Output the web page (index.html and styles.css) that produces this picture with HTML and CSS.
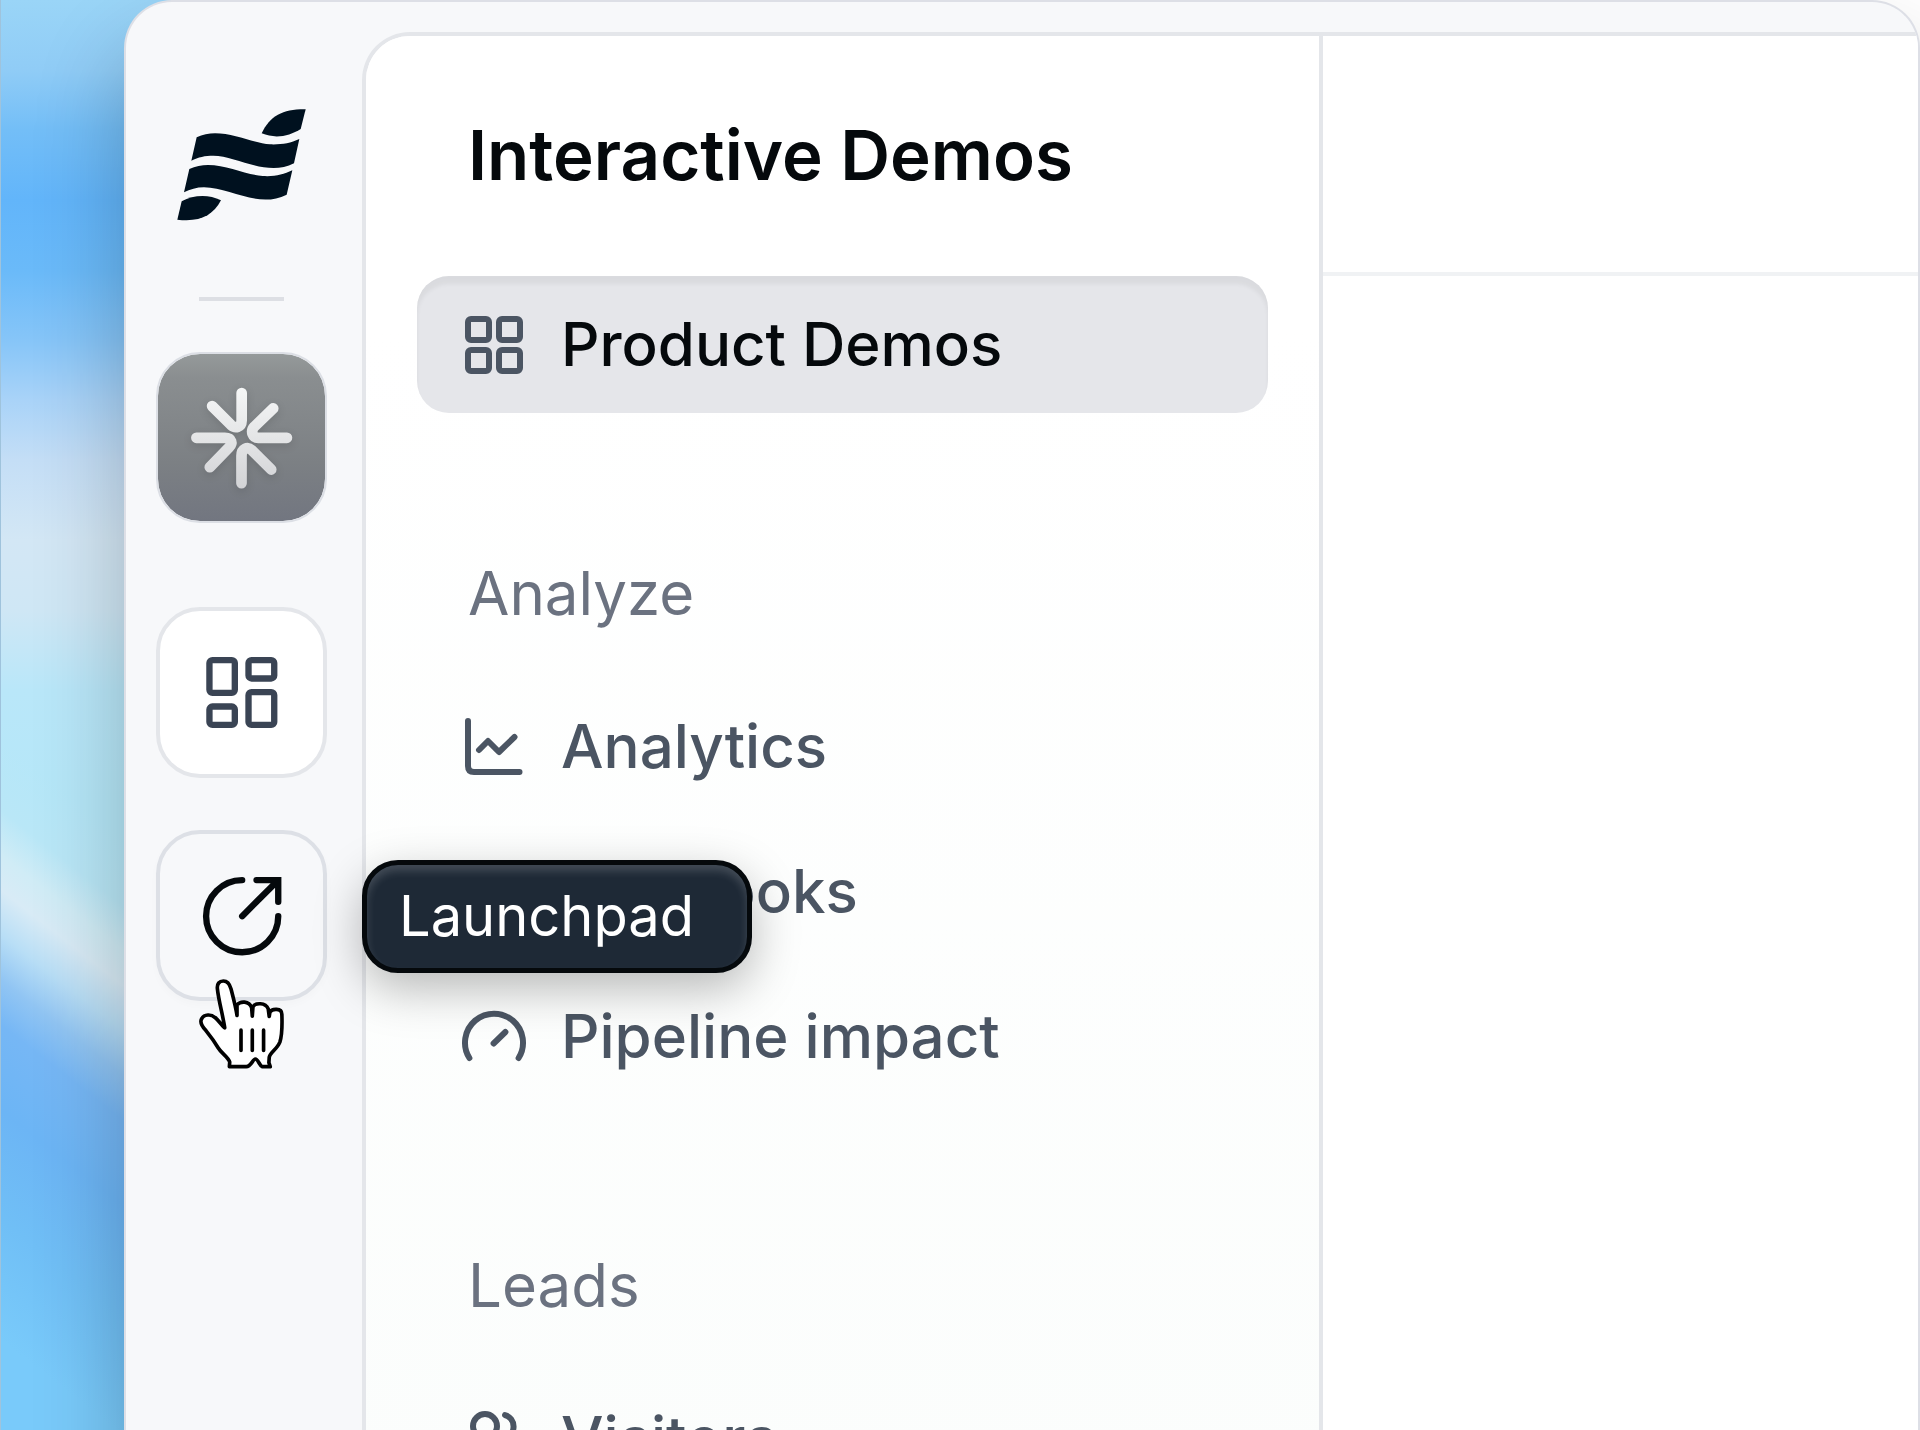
FILE: index.html
```html
<!DOCTYPE html>
<html lang="en">
<head>
<meta charset="utf-8">
<meta name="viewport" content="width=device-width, initial-scale=1">
<title>Interactive Demos</title>
<link rel="stylesheet" href="styles.css">
</head>
<body>
<div class="stage">
  <div class="wallpaper"></div>
  <div class="window">
    <nav class="rail" aria-label="Workspace">
      <svg class="logo" viewBox="531 325 387 336" aria-hidden="true">
        <path d="M917 326L902 385C868 407 825 415 785 398C810 345 850 325 917 326Z"/>
        <path d="M590 410C660 375 745 426 810 431C845 432 870 428 898 415L882 488C800 530 710 465 640 465C615 465 595 469 574 480Z"/>
        <path d="M568 505C640 470 723 521 788 526C825 528 850 522 877 509L860 582C775 625 690 560 612 560C590 560 570 566 552 575Z"/>
        <path d="M545 602C580 583 625 580 663 599C638 645 600 665 532 657Z"/>
      </svg>
      <hr class="rail-divider">
      <button class="rail-button rail-app" type="button" aria-label="Apps">
        <svg viewBox="48 36 512 512" aria-hidden="true">
          <defs>
            <linearGradient id="spark" gradientUnits="userSpaceOnUse" x1="0" y1="140" x2="0" y2="445">
              <stop offset="0" stop-color="#f6f7f7"/><stop offset="1" stop-color="#d2d3d6"/>
            </linearGradient>
          </defs>
          <g class="spark">
            <path d="M304.500 159V241C304 263 285 266 272 254L216 198"/>
            <path d="M399 205L343 259C329 274 338 293 354 293H440"/>
            <path d="M169 293H254C276 293 278 310 267 321L209 381"/>
            <path d="M304 429V347C304 325 322 318 335 330L393 388"/>
          </g>
        </svg>
      </button>
      <button class="rail-button rail-home" type="button" aria-label="Dashboard">
        <svg viewBox="48 51 512 512" aria-hidden="true">
          <g class="line">
            <rect x="208" y="210" width="76" height="98" rx="9"/>
            <rect x="325" y="210" width="77" height="55" rx="9"/>
            <rect x="325" y="306" width="77" height="98" rx="9"/>
            <rect x="208" y="349" width="76" height="55" rx="9"/>
          </g>
        </svg>
      </button>
      <div class="rail-item">
        <button class="rail-button rail-launch" type="button" aria-label="Launchpad" aria-describedby="launchpad-tip">
          <svg viewBox="48 30 512 512" aria-hidden="true">
            <g class="line">
              <path d="M306 180A108 108 0 1 0 414 288"/>
              <path class="miter" d="M349 180H414V245M306 288L410 184"/>
            </g>
          </svg>
        </button>
        <span class="tooltip" id="launchpad-tip" role="tooltip">Launchpad</span>
        <svg class="pointer" viewBox="178 478 255 271" aria-hidden="true">
          <path d="M255 625C250 590 236 540 233 508C231 492 239 484 251 484C264 484 270 493 274 508C281 535 289 565 292 588L292 556C302 544 328 543 336 564L338 590L340 562C346 549 378 548 386 568L389 591L391 578C396 567 427 564 427 584C428 610 427 650 421 668C412 690 391 700 389 714L388 730L392 742H368C360 740 356 719 347 719C340 719 334 742 320 742H269L270 728C265 712 245 702 235 685C225 668 212 650 199 634C186 620 180 608 185 599C193 582 215 584 226 594C238 604 246 618 255 625Z"/>
          <path d="M304 632V693M338 632V693M372 632V693"/>
        </svg>
      </div>
    </nav>
    <div class="panel">
      <aside class="sidebar">
        <h1>Interactive Demos</h1>
        <ul>
          <li><a class="active" href="#product-demos">
            <svg viewBox="0 0 72 72" aria-hidden="true"><rect x="11" y="10" width="21" height="21" rx="3"/><rect x="42" y="10" width="21" height="21" rx="3"/><rect x="11" y="41" width="21" height="21" rx="3"/><rect x="42" y="41" width="21" height="21" rx="3"/></svg>
            Product Demos</a></li>
        </ul>
        <h2>Analyze</h2>
        <ul>
          <li><a href="#analytics">
            <svg viewBox="0 0 72 72" aria-hidden="true"><path d="M11 10V55Q11 61 17 61H62.500M22 39L31 30L42 41L57.500 26"/></svg>
            Analytics</a></li>
          <li><a href="#playbooks">
            <svg viewBox="0 0 72 72" aria-hidden="true"><path d="M38.500 7V62M38.500 18Q30 11 10 12V54Q30 53 38.500 62Q47 53 66 54V12Q47 11 38.500 18"/></svg>
            Playbooks</a></li>
          <li><a href="#pipeline">
            <svg viewBox="0 0 72 72" aria-hidden="true"><path d="M12.400 57A29 29 0 1 1 61.600 57M36.600 42.500L48.400 31"/></svg>
            Pipeline impact</a></li>
        </ul>
        <h2>Leads</h2>
        <ul>
          <li><a href="#visitors">
            <svg viewBox="0 0 72 72" aria-hidden="true"><circle cx="28" cy="23" r="12"/><path d="M48 12A12 12 0 0 1 48 35M8 62V57Q8 46 19 46H37Q48 46 48 57V62M64 62V57Q64 49 56 46"/></svg>
            Visitors</a></li>
        </ul>
      </aside>
      <main class="content"><header class="content-header"></header></main>
    </div>
  </div>
</div>
</body>
</html>
```
FILE: styles.css
```css
* {
  box-sizing: border-box;
}

body {
  margin: 0;
  background: #fff;
  font-family: Inter, "Liberation Sans", sans-serif;
}

.stage {
  position: relative;
  height: 100vh;
  padding-left: 124px;
  overflow: hidden;
}

/* Blurred sky behind the window */
.wallpaper {
  position: absolute;
  inset: 0 50% 0 0;
  overflow: hidden;
  border-left: 1px solid #9fc3dc;
  background: linear-gradient(#9ad5f7 0, #90ccf6 70px, #73bef7 130px, #62b5fa 200px, #6abaf9 270px, #86c5f8 340px, #a9d3f8 400px, #c4def6 460px, #d3e7f5 540px, #cfe7f5 610px, #b9e7f9 690px, #b5e7f8 800px);
}

.wallpaper::after {
  content: "";
  position: absolute;
  top: 740px;
  left: 0;
  width: 200px;
  height: 1000px;
  transform: skewY(38deg);
  transform-origin: 0 0;
  background: linear-gradient(#b5e7f800 0, #b9e7f7 70px, #d0ecf6 115px, #d8ebf6 150px, #b8def6 195px, #91c5f3 240px, #76b7f5 285px, #6cb5f5 370px, #70bff6 480px, #79cafa 600px);
}

.window {
  position: relative;
  display: flex;
  min-height: 100vh;
  padding-top: 30px;
  border: 2px solid #dddfe6;
  border-bottom: 0;
  border-radius: 48px 48px 0 0;
  overflow: hidden;
  background: #f7f8fa;
  box-shadow: 0 50px 90px rgba(0, 0, 0, 0.24);
}

.rail {
  position: relative;
  z-index: 1;
  display: flex;
  flex: 0 0 236px;
  flex-direction: column;
  align-items: center;
  padding: 77px 5px 0 0;
}

.logo {
  width: 129px;
  height: 112px;
  fill: #00111f;
}

.rail-divider {
  width: 85px;
  height: 4px;
  margin: 76px 0 51px;
  border: 0;
  background: #dddfe4;
}

.rail-button {
  display: block;
  width: 171px;
  height: 171px;
  padding: 0;
  border: 4px solid #e4e6ea;
  border-radius: 44px;
  background: #fff;
  cursor: pointer;
}

.rail-button svg {
  display: block;
  width: 171px;
  height: 171px;
  margin: -4px;
}

.line {
  fill: none;
  stroke: currentColor;
  stroke-width: 19;
  stroke-linecap: round;
  stroke-linejoin: round;
}

.miter {
  stroke-linejoin: miter;
}

.rail-app {
  border: 2px solid #dcdfe5;
  background: linear-gradient(#959a9a 0, #8a8e90 14%, #7c8084 65%, #727680 100%) padding-box;
}

.rail-app svg {
  margin: -2px;
}

.spark {
  fill: none;
  stroke: url(#spark);
  stroke-width: 32;
  stroke-linecap: round;
  stroke-linejoin: round;
  filter: drop-shadow(0 8px 12px rgba(0, 0, 0, 0.12));
}

.rail-home {
  margin: 84px 0 52px;
  color: #3a4454;
}

.rail-item {
  position: relative;
}

.rail-launch {
  border-color: #dde0e6;
  background: #f7f8fa;
  color: #05090c;
  box-shadow: 0 4px 8px rgba(0, 0, 0, 0.02);
}

.tooltip {
  position: absolute;
  top: 30px;
  left: 206px;
  padding: 0 53px 0 32px;
  border: 5px solid #05090c;
  border-radius: 36px;
  background: #1e2936;
  box-shadow: inset 0 6px 8px rgba(255, 255, 255, 0.16), 0 16px 48px rgba(0, 0, 0, 0.28);
  color: #fff;
  font-size: 56px;
  line-height: 103px;
  white-space: nowrap;
}

.pointer {
  position: absolute;
  top: 149px;
  left: 43px;
  width: 85px;
  height: 90px;
  fill: #fff;
  stroke: #000;
  stroke-width: 11;
  stroke-linecap: round;
  stroke-linejoin: round;
}

.panel {
  display: flex;
  flex: 1;
  min-width: 0;
  border-top: 4px solid #e4e6ea;
  border-left: 4px solid #e4e6ea;
  border-radius: 48px 0 0 0;
  background: #fff;
}

.sidebar {
  flex: 0 0 957px;
  padding: 75px 51px 0;
  border-right: 4px solid #e4e6ea;
  border-radius: 44px 0 0 0;
  background: linear-gradient(#fff 0, #fff 20%, #fbfdfc 100%);
}

h1,
h2 {
  margin: 0;
  padding-left: 51px;
}

h1 {
  margin-bottom: 77px;
  color: #05090c;
  font-size: 69px;
  font-weight: 600;
  line-height: 88px;
}

h2 {
  margin: 144px 0 49px;
  color: #6b7280;
  font-size: 60px;
  font-weight: 400;
  line-height: 72px;
}

ul {
  display: flex;
  flex-direction: column;
  gap: 8px;
  margin: 0;
  padding: 0;
  list-style: none;
}

.sidebar a {
  display: flex;
  align-items: center;
  gap: 32px;
  padding-left: 40px;
  border-radius: 32px;
  color: #4b5563;
  font-size: 60px;
  font-weight: 500;
  line-height: 137px;
  text-decoration: none;
  white-space: nowrap;
}

.sidebar a svg {
  flex: none;
  width: 72px;
  height: 72px;
  fill: none;
  stroke: #4b5563;
  stroke-width: 6;
  stroke-linecap: round;
  stroke-linejoin: round;
}

.sidebar a.active {
  background: #e5e6ea;
  box-shadow: inset 0 8px 4px rgba(0, 0, 0, 0.05);
  color: #05090c;
}

.content {
  flex: 1;
  min-width: 0;
}

.content-header {
  height: 240px;
  border-bottom: 4px solid #f0f2f4;
}
```
